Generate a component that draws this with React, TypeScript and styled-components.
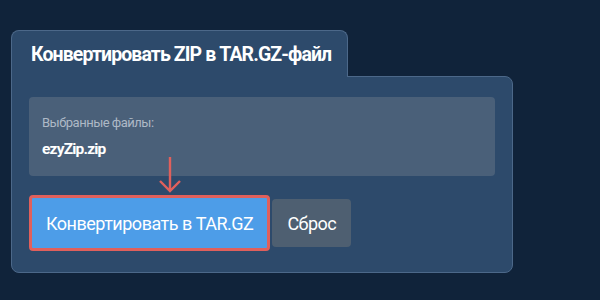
import styled, { createGlobalStyle } from "styled-components";

const GlobalStyle = createGlobalStyle`
  html, body {
    margin: 0;
    padding: 0;
    background: #10233a;
  }
  body {
    font-family: Roboto, "Noto Sans", sans-serif;
  }
`;

const Page = styled.div`
  width: 600px;
  height: 300px;
  padding: 30px 0 0 11px;
  box-sizing: border-box;
`;

const Card = styled.div`
  display: flex;
  flex-direction: column;
  width: 502px;
`;

const Tab = styled.div`
  position: relative;
  z-index: 1;
  width: 337px;
  height: 47px;
  box-sizing: border-box;
  margin-bottom: -1px;
  padding: 12px 0 0 19px;
  background: #2d4a6b;
  border: 1px solid #4c6889;
  border-bottom: none;
  border-radius: 8px 8px 0 0;

  h1 {
    margin: 0;
    font-family: Roboto, sans-serif;
    font-size: 19.5px;
    font-weight: 700;
    letter-spacing: -0.9px;
    color: #ffffff;
    line-height: 24px;
    white-space: nowrap;
  }
`;

const Panel = styled.div`
  position: relative;
  height: 197px;
  box-sizing: border-box;
  padding: 20px 17px 0;
  background: #2d4a6b;
  border: 1px solid #4c6889;
  border-radius: 0 8px 8px 8px;
  display: flex;
  flex-direction: column;
  gap: 19px;
`;

const FilesBox = styled.div`
  height: 79px;
  box-sizing: border-box;
  padding: 18px 13px 0;
  background: #4a6079;
  border-radius: 4px;
  display: flex;
  flex-direction: column;
  gap: 9px;
`;

const FilesLabel = styled.span`
  font-size: 13px;
  line-height: 16px;
  letter-spacing: -0.5px;
  color: #aeb9c6;
`;

const FileName = styled.span`
  font-size: 15.5px;
  font-weight: 700;
  line-height: 18px;
  letter-spacing: -0.8px;
  color: #ffffff;
`;

const Actions = styled.div`
  position: relative;
  display: flex;
  align-items: center;
  gap: 2px;
`;

const Button = styled.button<{ $variant: "primary" | "secondary" }>`
  font-family: Roboto, "Noto Sans", sans-serif;
  font-size: 18px;
  letter-spacing: -0.5px;
  color: #ffffff;
  border-radius: 4px;
  cursor: pointer;
  box-sizing: border-box;
  background: ${(p) => (p.$variant === "primary" ? "#4d9de8" : "#4e5f71")};
  border: ${(p) => (p.$variant === "primary" ? "3px solid #e0605c" : "none")};
  height: ${(p) => (p.$variant === "primary" ? "56px" : "48px")};
  padding: ${(p) => (p.$variant === "primary" ? "0 14px" : "0 15px")};
`;

const Pointer = styled.svg`
  position: absolute;
  left: 129px;
  top: -39px;
`;

export default function App() {
  return (
    <>
      <GlobalStyle />
      <Page>
        <Card>
          <Tab>
            <h1>Конвертировать ZIP в TAR.GZ-файл</h1>
          </Tab>
          <Panel>
            <FilesBox>
              <FilesLabel>Выбранные файлы:</FilesLabel>
              <FileName>ezyZip.zip</FileName>
            </FilesBox>
            <Actions>
              <Pointer width="24" height="38" viewBox="0 0 24 38">
                <path
                  d="M12 1 V35 M2 25 L12 35 L22 25"
                  fill="none"
                  stroke="#e0605c"
                  strokeWidth="2.4"
                />
              </Pointer>
              <Button $variant="primary">Конвертировать в TAR.GZ</Button>
              <Button $variant="secondary">Сброс</Button>
            </Actions>
          </Panel>
        </Card>
      </Page>
    </>
  );
}
